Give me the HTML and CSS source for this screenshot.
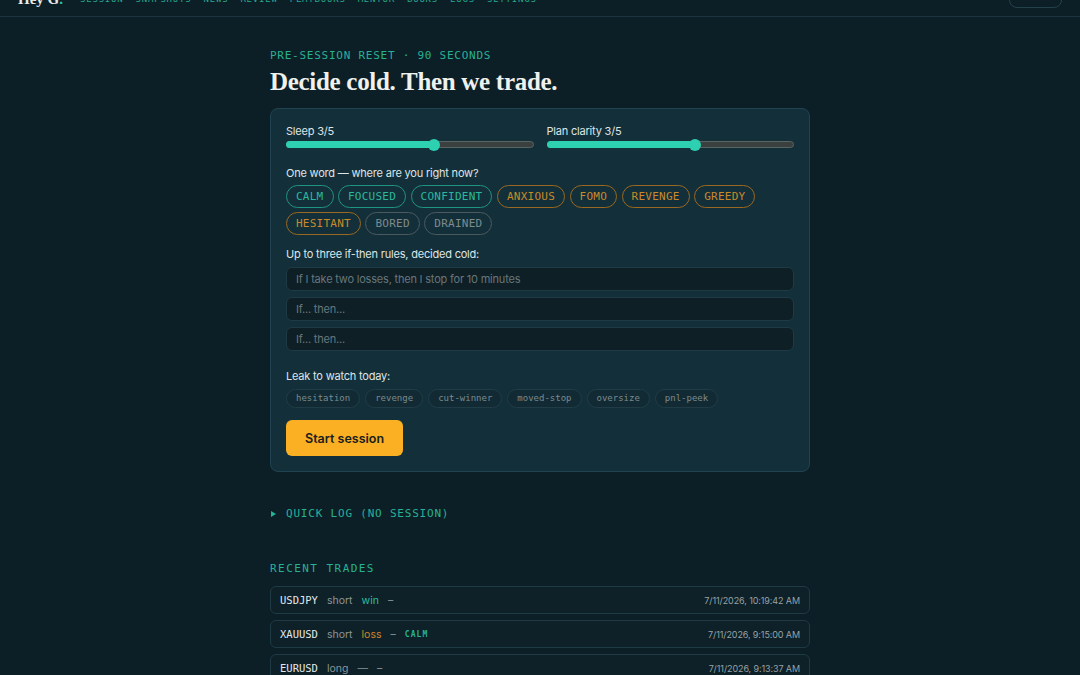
FILE: index.html
```html
<!DOCTYPE html>
<html lang="en">
<head>
<meta charset="utf-8">
<title>Pre-session reset</title>
<link rel="stylesheet" href="styles.css">
</head>
<body>
<header class="topbar">
  <div class="brand">Hey G<span class="dot">.</span></div>
  <nav class="nav">
    <a>SESSION</a><a>SNAPSHOTS</a><a>NEWS</a><a>REVIEW</a><a>PLAYBOOKS</a><a>MENTOR</a><a>BOOKS</a><a>LOGS</a><a>SETTINGS</a>
  </nav>
  <div class="spacer"></div>
  <button class="intro"><span class="intro-ico"></span>Intro</button>
</header>

<main class="main">
  <div class="eyebrow">PRE-SESSION RESET · 90 SECONDS</div>
  <h1 class="title">Decide cold. Then we trade.</h1>

  <section class="card">
    <div class="sliders">
      <div class="slider-block">
        <div class="label">Sleep 3/5</div>
        <div class="track"><div class="fill" style="width:60%"></div><div class="thumb" style="left:60%"></div></div>
      </div>
      <div class="slider-block">
        <div class="label">Plan clarity 3/5</div>
        <div class="track"><div class="fill" style="width:60%"></div><div class="thumb" style="left:60%"></div></div>
      </div>
    </div>

    <div class="label q q-mood">One word — where are you right now?</div>
    <div class="chips">
      <span class="chip teal">CALM</span>
      <span class="chip teal">FOCUSED</span>
      <span class="chip teal">CONFIDENT</span>
      <span class="chip amber">ANXIOUS</span>
      <span class="chip amber">FOMO</span>
      <span class="chip amber">REVENGE</span>
      <span class="chip amber">GREEDY</span>
      <span class="chip amber">HESITANT</span>
      <span class="chip gray">BORED</span>
      <span class="chip gray">DRAINED</span>
    </div>

    <div class="label q q-rules">Up to three if-then rules, decided cold:</div>
    <div class="rules">
      <input class="rule" placeholder="If I take two losses, then I stop for 10 minutes">
      <input class="rule" placeholder="If... then...">
      <input class="rule" placeholder="If... then...">
    </div>

    <div class="label q q-leak">Leak to watch today:</div>
    <div class="leaks">
      <span class="leak">hesitation</span>
      <span class="leak">revenge</span>
      <span class="leak">cut-winner</span>
      <span class="leak">moved-stop</span>
      <span class="leak">oversize</span>
      <span class="leak">pnl-peek</span>
    </div>

    <button class="start">Start session</button>
  </section>

  <div class="quick"><span class="tri"></span>QUICK LOG (NO SESSION)</div>

  <div class="recent">RECENT TRADES</div>
  <div class="trades">
    <div class="trade">
      <span class="sym">USDJPY</span><span class="side">short</span><span class="res win">win</span><span class="dash">–</span>
      <span class="time">7/11/2026, 10:19:42 AM</span>
    </div>
    <div class="trade">
      <span class="sym">XAUUSD</span><span class="side">short</span><span class="res loss">loss</span><span class="dash">–</span><span class="tag">CALM</span>
      <span class="time">7/11/2026, 9:15:00 AM</span>
    </div>
    <div class="trade">
      <span class="sym">EURUSD</span><span class="side">long</span><span class="res none">—</span><span class="dash">–</span>
      <span class="time">7/11/2026, 9:13:37 AM</span>
    </div>
  </div>
</main>
</body>
</html>
```

FILE: styles.css
```css
* { box-sizing: border-box; }
html, body { margin: 0; padding: 0; }
body {
  background: #0d1f26;
  color: #e4e9ea;
  font-family: Inter, "Noto Sans", sans-serif;
  overflow: hidden;
  height: 675px;
}

.topbar {
  height: 35px;
  margin-top: -18px;
  border-bottom: 1px solid #1b3642;
  display: flex;
  align-items: center;
  padding: 0 18px 0 18px;
  gap: 17px;
}
.brand {
  font-family: "Liberation Serif", serif;
  font-weight: bold;
  font-size: 15px;
  color: #e8ecea;
}
.brand .dot { color: #2cc4a4; }
.nav { display: flex; gap: 12px; }
.nav a {
  font-family: "DejaVu Sans Mono", monospace;
  font-size: 9px;
  letter-spacing: 0.8px;
  color: #25a88f;
}
.spacer { flex: 1; }
.intro {
  height: 24px;
  width: 53px;
  margin-top: -6px;
  border: 1px solid #24404a;
  border-radius: 8px;
  background: transparent;
  color: #8a979a;
  font-size: 9px;
  display: flex;
  align-items: center;
  gap: 4px;
  padding: 0 8px;
}
.intro-ico { width: 7px; height: 6px; background: #c98a2a; border-radius: 1px; }

.main {
  width: 540px;
  margin: 0 auto;
  padding-top: 32px;
}

.eyebrow {
  font-family: "DejaVu Sans Mono", monospace;
  font-size: 11px;
  letter-spacing: 0.75px;
  color: #27b196;
  line-height: 14px;
}
.title {
  margin: 5px 0 12px;
  font-family: "Liberation Serif", serif;
  font-weight: bold;
  font-size: 25px;
  line-height: 28px;
  color: #eef1ee;
  letter-spacing: -0.3px;
}

.card {
  background: #132f3a;
  border: 1px solid #1f4350;
  border-radius: 8px;
  padding: 15px 15px 15px;
}

.label {
  font-size: 11px;
  letter-spacing: -0.2px;
  line-height: 14px;
  color: #dfe5e6;
}
.sliders {
  display: grid;
  grid-template-columns: 1fr 1fr;
  gap: 13px;
}
.slider-block .label { margin-bottom: 3px; }
.track {
  position: relative;
  height: 7px;
  border-radius: 4px;
  background: #3a403f;
  border: 1px solid #5a6462;
}
.fill {
  position: absolute;
  left: -1px; top: -1px; bottom: -1px;
  background: #2dd0b0;
  border-radius: 4px;
}
.thumb {
  position: absolute;
  top: 50%;
  width: 12px; height: 12px;
  margin: -6px 0 0 -6px;
  border-radius: 50%;
  background: #2dd0b0;
}

.q-mood { margin-top: 18px; margin-bottom: 5px; }
.q-rules { margin-top: 12px; margin-bottom: 6px; }
.q-leak { margin-top: 18px; margin-bottom: 6px; }

.chips {
  display: flex;
  flex-wrap: wrap;
  gap: 4px 4.5px;
}
.chip {
  font-family: "DejaVu Sans Mono", monospace;
  font-size: 11px;
  letter-spacing: 0.25px;
  height: 23px;
  line-height: 21px;
  padding: 0 9px;
  border-radius: 12px;
  border: 1px solid;
}
.chip.teal { color: #2bb89c; border-color: #1f9480; }
.chip.amber { color: #c98a2a; border-color: #9a6820; }
.chip.gray { color: #7f8b8d; border-color: #4b5a5d; }

.rules { display: flex; flex-direction: column; gap: 6px; }
.rule {
  height: 24px;
  width: 100%;
  background: #0e1f26;
  border: 1px solid #1d3a45;
  border-radius: 6px;
  padding: 0 9px;
  font-family: Inter, sans-serif;
  font-size: 11px;
  letter-spacing: -0.2px;
  color: #dfe5e6;
  outline: none;
}
.rule::placeholder { color: #66777c; }

.leaks { display: flex; gap: 5px; }
.leak {
  font-family: "DejaVu Sans Mono", monospace;
  font-size: 9px;
  height: 19px;
  line-height: 17px;
  padding: 0 9px;
  border-radius: 10px;
  border: 1px solid #1f3c47;
  background: #112a33;
  color: #7d8b8f;
}

.start {
  margin-top: 12px;
  height: 36px;
  padding: 0 19px;
  border: none;
  border-radius: 6px;
  background: #fbb024;
  color: #18201f;
  font-family: Inter, sans-serif;
  font-size: 12.5px;
  font-weight: 600;
}

.quick {
  margin-top: 35px;
  font-family: "DejaVu Sans Mono", monospace;
  font-size: 11px;
  letter-spacing: 0.8px;
  color: #27b196;
  line-height: 14px;
  display: flex;
  align-items: center;
}
.quick .tri {
  width: 0; height: 0;
  margin: 0 10px 0 1px;
  border-left: 5px solid #27b196;
  border-top: 3px solid transparent;
  border-bottom: 3px solid transparent;
}

.recent {
  margin-top: 41px;
  font-family: "DejaVu Sans Mono", monospace;
  font-size: 11px;
  letter-spacing: 1.45px;
  color: #27b196;
  line-height: 14px;
}

.trades {
  margin-top: 10px;
  display: flex;
  flex-direction: column;
  gap: 6px;
}
.trade {
  height: 28px;
  border: 1px solid #1e3a45;
  border-radius: 6px;
  background: #0e2028;
  display: flex;
  align-items: center;
  padding: 0 9px;
  gap: 9px;
  font-size: 10.5px;
}
.sym {
  font-family: "DejaVu Sans Mono", monospace;
  font-size: 10.5px;
  color: #e3e8e9;
}
.side { color: #8a9699; }
.win { color: #2bbf9f; }
.loss { color: #d4862a; }
.none, .dash { color: #8a9699; }
.tag {
  font-family: "DejaVu Sans Mono", monospace;
  font-size: 8px;
  letter-spacing: 1.1px;
  color: #27b196;
  font-weight: bold;
}
.time { margin-left: auto; color: #97a3a6; font-size: 9px; letter-spacing: -0.1px; }
```
